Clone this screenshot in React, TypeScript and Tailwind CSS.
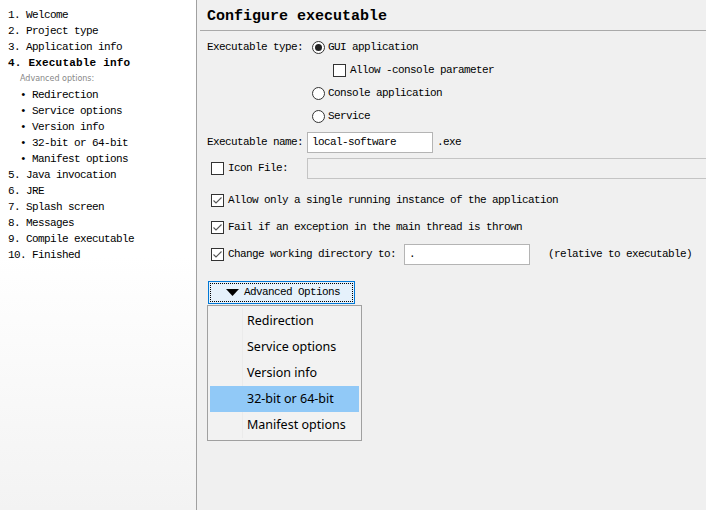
import React from 'react';

const mono = "font-['Liberation_Mono','DejaVu_Sans_Mono',monospace]";

const steps: { n: string; label: string; active?: boolean }[] = [
  { n: '1.', label: 'Welcome' },
  { n: '2.', label: 'Project type' },
  { n: '3.', label: 'Application info' },
  { n: '4.', label: 'Executable info', active: true },
];

const subSteps = ['Redirection', 'Service options', 'Version info', '32-bit or 64-bit', 'Manifest options'];

const laterSteps = [
  { n: '5.', label: 'Java invocation' },
  { n: '6.', label: 'JRE' },
  { n: '7.', label: 'Splash screen' },
  { n: '8.', label: 'Messages' },
  { n: '9.', label: 'Compile executable' },
  { n: '10.', label: 'Finished' },
];

function Radio({ checked }: { checked?: boolean }) {
  return (
    <span className="flex h-[13px] w-[13px] shrink-0 items-center justify-center rounded-full border border-[#333] bg-white">
      {checked && <span className="h-[7px] w-[7px] rounded-full bg-[#222]" />}
    </span>
  );
}

function Checkbox({ checked }: { checked?: boolean }) {
  return (
    <span className="flex h-[13px] w-[13px] shrink-0 items-center justify-center border border-[#333] bg-white">
      {checked && (
        <svg width="11" height="11" viewBox="0 0 11 11">
          <path d="M1.5 5.5 L4 8 L9.5 2.5" fill="none" stroke="#555" strokeWidth="1.1" />
        </svg>
      )}
    </span>
  );
}

function Txt({ children, className = '' }: { children: React.ReactNode; className?: string }) {
  return <span className={`${mono} shrink-0 text-[11px] tracking-[-0.6px] leading-none text-black whitespace-pre ${className}`}>{children}</span>;
}

export default function App() {
  return (
    <div className="flex h-[510px] w-[706px] overflow-hidden bg-[#f0f0f0]">
      {/* wizard steps */}
      <aside className="w-[197px] shrink-0 border-r border-[#a0a0a0] bg-gradient-to-b from-white via-white to-[#f3f3f3] pt-[7px] pl-[8px]">
        {steps.map(s => (
          <div key={s.n} className="flex h-[16px] items-center">
            <Txt className={s.active ? 'font-bold tracking-[0.2px]' : ''}>{`${s.n} ${s.label}`}</Txt>
          </div>
        ))}
        <div className="flex h-[16px] items-center pl-[12px]">
          <span className="font-['DejaVu_Sans',sans-serif] text-[8px] text-[#888]">Advanced options:</span>
        </div>
        {subSteps.map(s => (
          <div key={s} className="flex h-[16px] items-center pl-[12px]">
            <Txt>{`• ${s}`}</Txt>
          </div>
        ))}
        {laterSteps.map(s => (
          <div key={s.n} className="flex h-[16px] items-center">
            <Txt>{`${s.n} ${s.label}`}</Txt>
          </div>
        ))}
      </aside>

      {/* configuration panel */}
      <main className="flex-1 overflow-hidden">
        <div className="flex h-[30px] items-center pl-[10px] pt-[2px]">
          <span className={`${mono} text-[15px] font-bold leading-none text-black`}>Configure executable</span>
        </div>
        <div className="ml-[3px] h-px bg-[#a9a9a9]" />

        <div className="pl-[10px]">
          <div className="mt-[6px] flex h-[20px] items-center">
            <Txt className="w-[105px]">Executable type:</Txt>
            <Radio checked />
            <Txt className="ml-[3px]">GUI application</Txt>
          </div>
          <div className="mt-[3px] flex h-[20px] items-center pl-[126px]">
            <Checkbox />
            <Txt className="ml-[4px]">Allow -console parameter</Txt>
          </div>
          <div className="mt-[3px] flex h-[20px] items-center pl-[105px]">
            <Radio />
            <Txt className="ml-[3px]">Console application</Txt>
          </div>
          <div className="mt-[3px] flex h-[20px] items-center pl-[105px]">
            <Radio />
            <Txt className="ml-[3px]">Service</Txt>
          </div>

          <div className="mt-[6px] flex h-[21px] items-center">
            <Txt className="w-[100px]">Executable name:</Txt>
            <div className="flex h-[21px] w-[126px] shrink-0 items-center border border-[#b4b4b4] bg-white pl-[4px]">
              <Txt>local-software</Txt>
            </div>
            <Txt className="ml-[4px]">.exe</Txt>
          </div>

          <div className="mt-[5px] flex h-[21px] items-center">
            <div className="flex w-[100px] shrink-0 items-center pl-[4px]">
              <Checkbox />
              <Txt className="ml-[4px]">Icon File:</Txt>
            </div>
            <div className="h-[21px] w-[420px] shrink-0 border border-[#c4c4c4] bg-[#f0f0f0]" />
          </div>

          <div className="mt-[11px] flex h-[20px] items-center pl-[4px]">
            <Checkbox checked />
            <Txt className="ml-[4px]">Allow only a single running instance of the application</Txt>
          </div>
          <div className="mt-[7px] flex h-[20px] items-center pl-[4px]">
            <Checkbox checked />
            <Txt className="ml-[4px]">Fail if an exception in the main thread is thrown</Txt>
          </div>
          <div className="mt-[7px] flex h-[21px] items-center pl-[4px]">
            <Checkbox checked />
            <Txt className="ml-[4px] w-[176px]">Change working directory to:</Txt>
            <div className="flex h-[21px] w-[126px] shrink-0 items-center border border-[#b4b4b4] bg-white pl-[4px]">
              <Txt>.</Txt>
            </div>
            <Txt className="ml-[18px]">(relative to executable)</Txt>
          </div>

          <div className="relative ml-[1px] mt-[16px] w-[147px]">
            <button className="flex h-[23px] w-[147px] border border-[#0078d7] bg-[#e5f1fb] p-px">
              <span className="flex h-full w-full items-center border border-dotted border-black pl-[15px]">
                <svg width="13" height="7" viewBox="0 0 13 7" className="shrink-0">
                  <polygon points="0,0 13,0 6.5,7" fill="#000" />
                </svg>
                <Txt className="ml-[5px] text-[10.5px] tracking-[-0.4px]">Advanced Options</Txt>
              </span>
            </button>

            {/* dropdown menu */}
            <div className="absolute left-[-1px] top-full mt-[1px] w-[155px] border border-[#a0a0a0] bg-[#f2f2f2] p-[2px]">
              <div className="absolute bottom-[2px] left-[34px] top-[2px] w-px bg-[#ebebeb]" />
              {subSteps.map(s => (
                <div
                  key={s}
                  className={`relative flex h-[26px] items-center pl-[37px] pt-px font-['Noto_Sans',sans-serif] text-[12.5px] text-black ${s === '32-bit or 64-bit' ? 'bg-[#91c9f7]' : ''}`}
                >
                  {s}
                </div>
              ))}
            </div>
          </div>
        </div>
      </main>
    </div>
  );
}
